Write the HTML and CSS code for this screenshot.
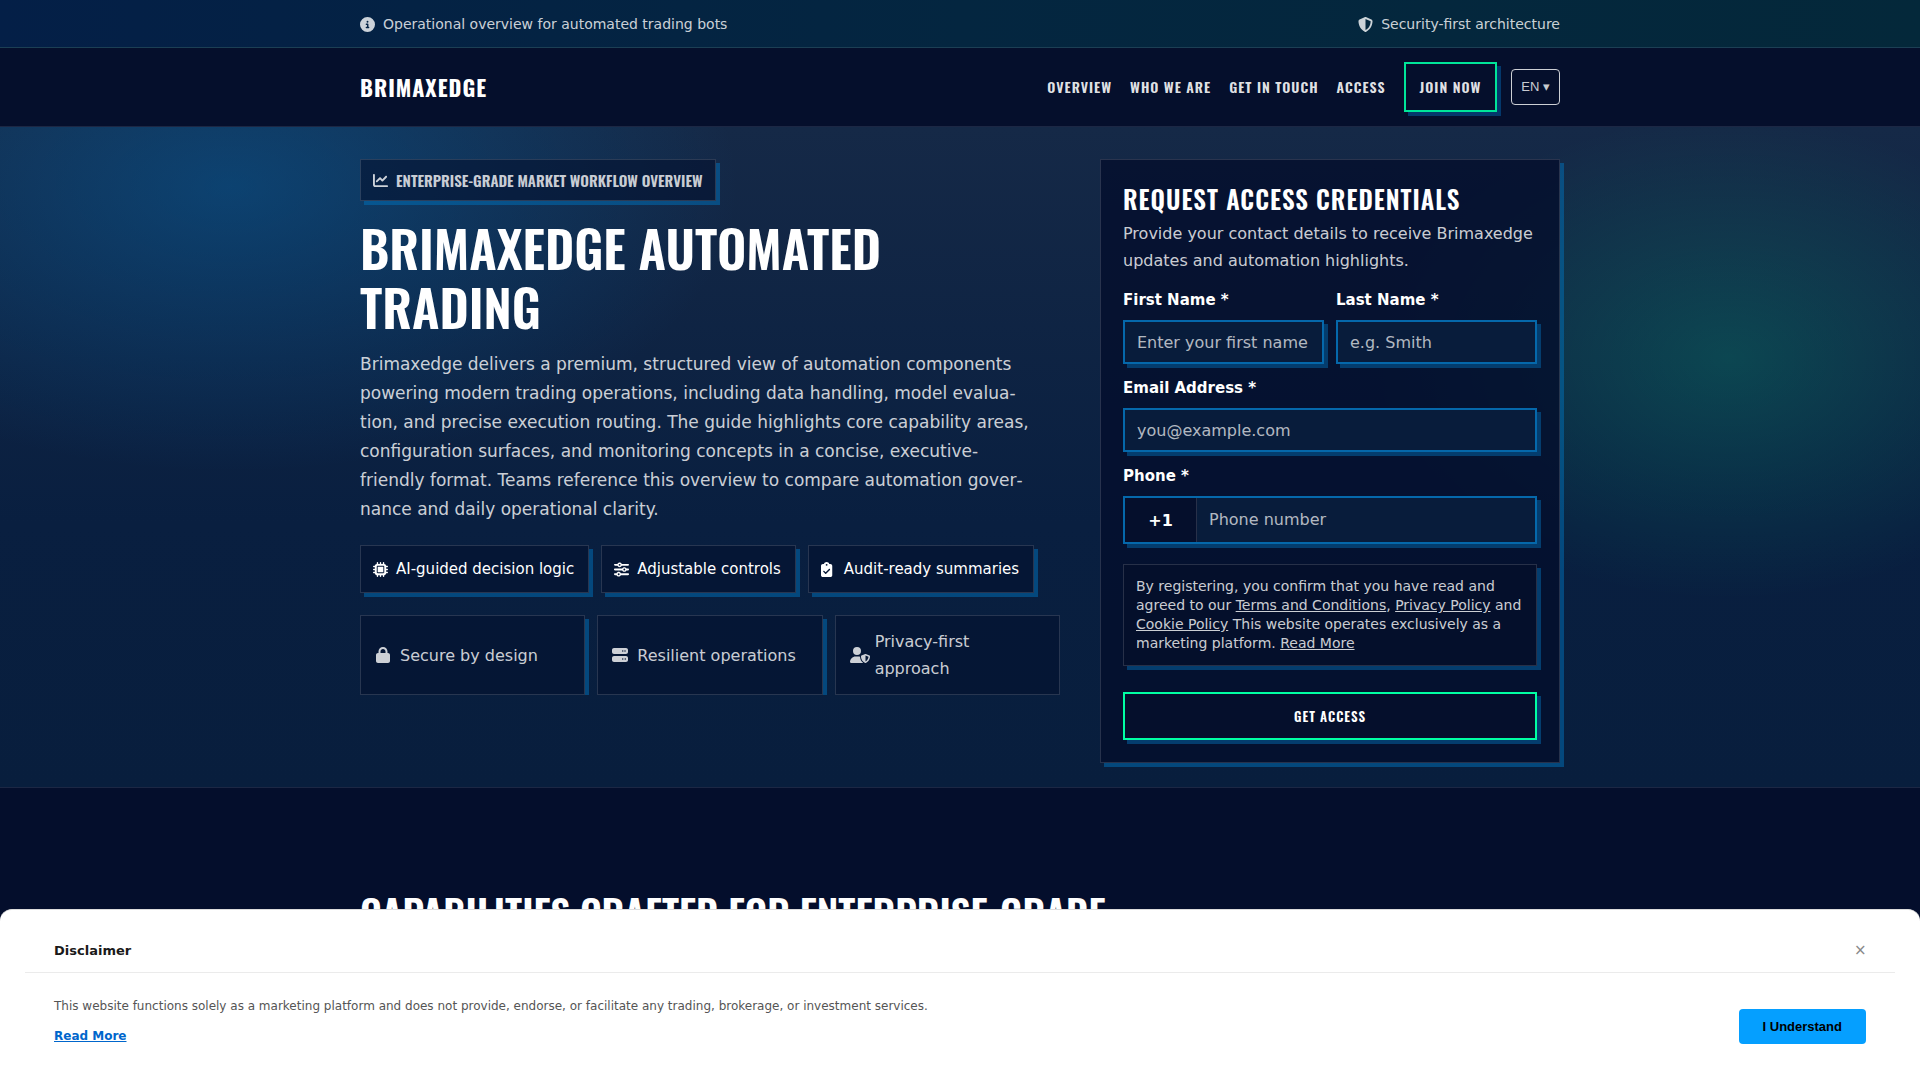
FILE: index.html
```html
<!DOCTYPE html>
<html lang="en">
<head>
<meta charset="utf-8">
<meta name="viewport" content="width=device-width, initial-scale=1">
<title>Brimaxedge</title>
<link rel="stylesheet" href="styles.css">
</head>
<body>
<div class="topbar">
  <div class="container topbar-inner">
    <span class="topbar-item"><svg class="icon" viewBox="0 0 512 512" aria-hidden="true"><path d="M256 512A256 256 0 1 0 256 0a256 256 0 1 0 0 512zM216 336h24V272H216c-13.3 0-24-10.7-24-24s10.7-24 24-24h48c13.3 0 24 10.7 24 24v88h8c13.3 0 24 10.7 24 24s-10.7 24-24 24H216c-13.3 0-24-10.7-24-24s10.7-24 24-24zm40-208a32 32 0 1 1 0 64 32 32 0 1 1 0-64z"/></svg>Operational overview for automated trading bots</span>
    <span class="topbar-item"><svg class="icon" viewBox="0 0 512 512" aria-hidden="true"><path d="M256 0c4.6 0 9.2 1 13.4 2.9L457.7 82.8c22 9.3 38.4 31 38.3 57.2c-.5 99.2-41.3 280.7-213.6 363.2c-16.7 8-36.1 8-52.8 0C57.3 420.7 16.5 239.2 16 140c-.1-26.2 16.3-47.9 38.3-57.2L242.7 2.9C246.8 1 251.4 0 256 0zm0 66.8V444.8C394 378 431.1 230.1 432 141.4L256 66.8z"/></svg>Security-first architecture</span>
  </div>
</div>

<header class="header">
  <div class="container header-inner">
    <a class="logo" href="#">Brimaxedge</a>
    <nav class="nav">
      <a class="nav-link" href="#overview">Overview</a>
      <a class="nav-link" href="#about">Who we are</a>
      <a class="nav-link" href="#contact">Get in touch</a>
      <a class="nav-link" href="#access">Access</a>
      <a class="nav-cta" href="#join">Join now</a>
      <button class="lang" type="button">EN ▾</button>
    </nav>
  </div>
</header>

<main>
<section class="hero">
  <div class="container hero-grid">
    <div class="hero-copy">
      <p class="badge"><svg class="icon" viewBox="0 0 512 512" aria-hidden="true"><path d="M64 64c0-17.700-14.300-32-32-32S0 46.300 0 64V400c0 44.200 35.800 80 80 80H480c17.700 0 32-14.300 32-32s-14.300-32-32-32H80c-8.800 0-16-7.200-16-16V64zm406.600 86.600c12.500-12.500 12.500-32.800 0-45.300s-32.800-12.500-45.300 0L320 210.700l-57.400-57.400c-12.500-12.500-32.800-12.500-45.300 0l-112 112c-12.500 12.500-12.500 32.800 0 45.300s32.800 12.500 45.300 0L240 221.300l57.400 57.400c12.500 12.500 32.800 12.500 45.300 0l128-128z"/></svg>Enterprise-grade market workflow overview</p>
      <h1 class="hero-title">Brimaxedge Automated Trading</h1>
      <p class="lead">Brimaxedge delivers a premium, structured view of automation components powering modern trading operations, including data handling, model evalua&shy;tion, and precise execution routing. The guide highlights core capability areas, configuration surfaces, and monitoring concepts in a concise, executive-friendly format. Teams reference this overview to compare automation gover&shy;nance and daily operational clarity.</p>
      <ul class="chips">
        <li class="chip"><svg class="icon" viewBox="0 0 512 512" aria-hidden="true"><path fill-rule="evenodd" d="M176 24c0-13.300-10.700-24-24-24s-24 10.700-24 24V64c-35.300 0-64 28.700-64 64H24c-13.300 0-24 10.700-24 24s10.700 24 24 24H64v56H24c-13.300 0-24 10.700-24 24s10.700 24 24 24H64v56H24c-13.300 0-24 10.700-24 24s10.700 24 24 24H64c0 35.300 28.700 64 64 64v40c0 13.300 10.700 24 24 24s24-10.700 24-24V448h56v40c0 13.300 10.700 24 24 24s24-10.700 24-24V448h56v40c0 13.300 10.700 24 24 24s24-10.700 24-24V448c35.300 0 64-28.700 64-64h40c13.300 0 24-10.700 24-24s-10.700-24-24-24H448V280h40c13.300 0 24-10.700 24-24s-10.700-24-24-24H448V176h40c13.300 0 24-10.700 24-24s-10.700-24-24-24H448c0-35.300-28.700-64-64-64V24c0-13.300-10.700-24-24-24s-24 10.700-24 24V64H280V24c0-13.300-10.700-24-24-24s-24 10.700-24 24V64H176V24zM160 128H352c17.700 0 32 14.300 32 32V352c0 17.700-14.300 32-32 32H160c-17.700 0-32-14.300-32-32V160c0-17.700 14.300-32 32-32zm192 32H160V352H352V160z"/></svg>AI-guided decision logic</li>
        <li class="chip"><svg class="icon" viewBox="0 0 512 512" aria-hidden="true"><path d="M0 416c0 17.700 14.300 32 32 32l54.700 0c12.300 28.300 40.500 48 73.300 48s61-19.700 73.300-48L480 448c17.700 0 32-14.300 32-32s-14.300-32-32-32l-246.700 0c-12.300-28.300-40.500-48-73.300-48s-61 19.700-73.300 48L32 384c-17.700 0-32 14.300-32 32zm128 0a32 32 0 1 1 64 0 32 32 0 1 1 -64 0zM320 256a32 32 0 1 1 64 0 32 32 0 1 1 -64 0zm32-80c-32.800 0-61 19.700-73.300 48L32 224c-17.700 0-32 14.300-32 32s14.300 32 32 32l246.700 0c12.300 28.300 40.500 48 73.300 48s61-19.700 73.300-48l54.700 0c17.700 0 32-14.300 32-32s-14.300-32-32-32l-54.700 0c-12.300-28.300-40.500-48-73.300-48zM192 128a32 32 0 1 1 0-64 32 32 0 1 1 0 64zm73.300-64C253 35.700 224.800 16 192 16s-61 19.700-73.300 48L32 64C14.300 64 0 78.300 0 96s14.300 32 32 32l86.700 0c12.300 28.300 40.500 48 73.300 48s61-19.700 73.300-48L480 128c17.700 0 32-14.300 32-32s-14.300-32-32-32L265.300 64z"/></svg>Adjustable controls</li>
        <li class="chip"><svg class="icon" viewBox="0 0 512 512" aria-hidden="true"><path d="M192 0c-41.800 0-77.400 26.700-90.500 64H64C28.700 64 0 92.700 0 128V448c0 35.300 28.700 64 64 64H320c35.300 0 64-28.700 64-64V128c0-35.300-28.700-64-64-64H282.500C269.400 26.700 233.800 0 192 0zm0 64a32 32 0 1 1 0 64 32 32 0 1 1 0-64zM305 273L177 401c-9.400 9.400-24.600 9.400-33.900 0L79 337c-9.400-9.400-9.400-24.600 0-33.900s24.600-9.400 33.900 0l47 47L271 239c9.400-9.400 24.600-9.400 33.900 0s9.400 24.600 0 33.900z"/></svg>Audit-ready summaries</li>
      </ul>
      <ul class="trust">
        <li class="trust-item"><svg class="icon-md" viewBox="0 0 448 512" aria-hidden="true"><path d="M144 144v48H304V144c0-44.200-35.800-80-80-80s-80 35.800-80 80zM80 192V144C80 64.500 144.500 0 224 0s144 64.500 144 144v48h16c35.300 0 64 28.700 64 64V448c0 35.300-28.700 64-64 64H64c-35.300 0-64-28.700-64-64V256c0-35.300 28.700-64 64-64H80z"/></svg>Secure by design</li>
        <li class="trust-item"><svg class="icon-md" viewBox="0 0 512 512" aria-hidden="true"><path d="M64 32C28.700 32 0 60.700 0 96v64c0 35.300 28.700 64 64 64H448c35.300 0 64-28.700 64-64V96c0-35.300-28.700-64-64-64H64zm280 72a24 24 0 1 1 0 48 24 24 0 1 1 0-48zm48 24a24 24 0 1 1 48 0 24 24 0 1 1 -48 0zM64 288c-35.300 0-64 28.700-64 64v64c0 35.300 28.700 64 64 64H448c35.300 0 64-28.700 64-64V352c0-35.300-28.700-64-64-64H64zm280 72a24 24 0 1 1 0 48 24 24 0 1 1 0-48zm56 24a24 24 0 1 1 48 0 24 24 0 1 1 -48 0z"/></svg>Resilient operations</li>
        <li class="trust-item"><svg class="icon-md" viewBox="0 0 512 512" aria-hidden="true"><path d="M224 256A128 128 0 1 0 224 0a128 128 0 1 0 0 256zm-45.700 48C79.800 304 0 383.800 0 482.300C0 498.700 13.300 512 29.700 512H418.300c1.800 0 3.500-.2 5.300-.5c-76.300-55.100-99.800-141-103.100-200.200c-16.100-4.800-33.100-7.300-50.700-7.300H178.300zm308.800-78.300l-120 48C358 277.400 352 286.200 352 296c0 63.300 25.900 168.800 134.800 214.200c5.900 2.500 12.600 2.500 18.500 0C614.100 464.800 640 359.300 640 296c0-9.800-6-18.600-15.100-22.300l-120-48c-5.700-2.300-12.100-2.300-17.800 0zM591.400 312c-3.900 50.700-27.200 116.700-95.400 149.700V273.800L591.400 312z"/></svg>Privacy-first approach</li>
      </ul>
    </div>

    <form class="card">
      <h2 class="card-title">Request access credentials</h2>
      <p class="card-text">Provide your contact details to receive Brimaxedge updates and automation highlights.</p>
      <div class="fields">
        <div class="field">
          <label class="label" for="first">First Name *</label>
          <input class="input" id="first" type="text" placeholder="Enter your first name">
        </div>
        <div class="field">
          <label class="label" for="last">Last Name *</label>
          <input class="input" id="last" type="text" placeholder="e.g. Smith">
        </div>
        <div class="field field-wide">
          <label class="label" for="email">Email Address *</label>
          <input class="input" id="email" type="email" placeholder="you@example.com">
        </div>
        <div class="field field-wide">
          <label class="label" for="phone">Phone *</label>
          <div class="phone">
            <span class="phone-code">+1</span>
            <input class="phone-input" id="phone" type="tel" placeholder="Phone number">
          </div>
        </div>
      </div>
      <p class="consent">By registering, you confirm that you have read and agreed to our <a href="#terms">Terms and Conditions</a>, <a href="#privacy">Privacy Policy</a> and <a href="#cookies">Cookie Policy</a> This website operates exclusively as a marketing platform. <a href="#more">Read More</a></p>
      <button class="submit" type="submit">Get access</button>
    </form>
  </div>
</section>

<section class="capabilities">
  <div class="container">
    <h2 class="section-title">Capabilities crafted for enterprise-grade</h2>
  </div>
</section>
</main>

<aside class="disclaimer" aria-label="Disclaimer">
  <div class="disclaimer-head">
    <strong class="disclaimer-title">Disclaimer</strong>
    <button class="close" type="button" aria-label="Close">×</button>
  </div>
  <div class="disclaimer-body">
    <div class="disclaimer-copy">
      <p class="disclaimer-text">This website functions solely as a marketing platform and does not provide, endorse, or facilitate any trading, brokerage, or investment services.</p>
      <a class="disclaimer-link" href="#more">Read More</a>
    </div>
    <button class="accept" type="button">I Understand</button>
  </div>
</aside>
</body>
</html>
```
FILE: styles.css
```css
:root {
  --display: "Oswald", "Liberation Sans Narrow", sans-serif;
  --body: "DejaVu Sans", sans-serif;
  --bg: #040e2c;
  --soft: rgba(255, 255, 255, .8);
  --line: rgba(255, 255, 255, .14);
  --shadow: rgba(0, 113, 188, .5);
  --panel: rgba(4, 16, 46, .6);
  --blue: #0568ab;
  --green: #00ffa3;
}

* { box-sizing: border-box; margin: 0; }

body {
  font: 16px/27px var(--body);
  background: var(--bg);
  color: #fff;
}

ul { list-style: none; padding: 0; }
a { color: inherit; }
svg { display: block; flex: none; fill: currentColor; }

.icon { width: 15px; height: 15px; }
.icon-md { width: 18px; height: 16px; overflow: visible; }

.container { max-width: 1200px; margin: 0 auto; }

.topbar {
  background: linear-gradient(90deg, #041f47, #042640 50%, #04283a);
  border-bottom: 1px solid #1c3f54;
  color: var(--soft);
  font-size: 14px;
  line-height: 23px;
}
.topbar-inner { display: flex; justify-content: space-between; padding: 13px 0 11px; }
.topbar-item { display: flex; align-items: center; gap: 8px; }

.header { border-bottom: 1px solid #1c2744; background: #050f2c; }
.header-inner { display: flex; align-items: center; justify-content: space-between; padding: 14px 0; }
.logo {
  font: 700 22px/36px var(--display);
  letter-spacing: 1px;
  text-transform: uppercase;
  text-decoration: none;
}
.nav { display: flex; align-items: center; gap: 18px; }
.nav-link, .nav-cta {
  font: 600 14px/24px var(--display);
  letter-spacing: 1px;
  text-transform: uppercase;
  text-decoration: none;
  color: rgba(255, 255, 255, .9);
}
.nav-cta {
  border: 2px solid #00e599;
  padding: 11px 14px;
  box-shadow: 4px 4px 0 #04386b;
}
.lang {
  margin-left: -4px;
  font: 13px/20px "Liberation Sans", sans-serif;
  color: var(--soft);
  background: none;
  border: 1px solid rgba(255, 255, 255, .8);
  border-radius: 4px;
  padding: 7px 9px;
}

.hero {
  border-bottom: 1px solid #1c2744;
  background:
    radial-gradient(ellipse 820px 460px at 12% 9%, rgba(0, 113, 188, .36), transparent 62%),
    radial-gradient(ellipse 570px 390px at 90% 35%, rgba(0, 255, 157, .16), transparent 62%),
    linear-gradient(180deg, #152947, #091f40 60%, #081e3d);
}
.hero-grid {
  display: grid;
  grid-template-columns: minmax(0, 1fr) 460px;
  gap: 40px;
  align-items: start;
  padding: 32px 0 24px;
}

.badge {
  display: inline-flex;
  align-items: center;
  gap: 8px;
  padding: 8px 12px;
  border: 1px solid var(--line);
  background: var(--panel);
  box-shadow: 4px 4px 0 var(--shadow);
  font: 600 15px/24px var(--display);
  text-transform: uppercase;
  color: var(--soft);
  vertical-align: top;
}
.hero-title {
  margin-top: 17px;
  font: 600 51px/59px var(--display);
  text-transform: uppercase;
}
.lead {
  max-width: 672px;
  margin-top: 14px;
  font-size: 17px;
  line-height: 29px;
  color: var(--soft);
}

.chips { display: flex; flex-wrap: wrap; gap: 12px; margin-top: 21px; }
.chip {
  display: flex;
  align-items: center;
  gap: 8px;
  padding: 10px 14px 10px 12px;
  border: 1px solid var(--line);
  background: var(--panel);
  box-shadow: 4px 4px 0 var(--shadow);
  font-size: 15px;
  line-height: 26px;
}
.trust {
  display: grid;
  grid-template-columns: repeat(3, 1fr);
  gap: 12px;
  margin-top: 22px;
  overflow: hidden;
}
.trust-item {
  display: flex;
  align-items: center;
  gap: 8px;
  min-height: 80px;
  padding: 12px 13px;
  border: 1px solid var(--line);
  background: var(--panel);
  box-shadow: 4px 4px 0 var(--shadow);
  color: var(--soft);
}

.card {
  padding: 22px;
  border: 1px solid var(--line);
  background: rgba(4, 14, 44, .8);
  box-shadow: 4px 4px 0 var(--shadow);
}
.card-title {
  margin-bottom: 4px;
  font: 600 25px/34px var(--display);
  letter-spacing: 1px;
  text-transform: uppercase;
}
.card-text { color: var(--soft); }
.fields {
  display: grid;
  grid-template-columns: 1fr 1fr;
  gap: 12px;
  margin-top: 14px;
}
.field { display: flex; flex-direction: column; gap: 8px; min-width: 0; }
.field-wide { grid-column: 1 / -1; }
.label { font-weight: 700; font-size: 15px; line-height: 24px; }
.input, .phone {
  width: 100%;
  height: 44px;
  border: 2px solid var(--blue);
  background: #081c3b;
  box-shadow: 4px 4px 0 #043d6e;
}
.input, .phone-input {
  padding: 0 12px;
  font: 16px/24px var(--body);
  color: #fff;
  border-radius: 0;
}
.input::placeholder, .phone-input::placeholder { color: rgba(255, 255, 255, .7); opacity: 1; }
.phone { display: flex; height: 48px; }
.phone-code {
  display: flex;
  align-items: center;
  justify-content: center;
  width: 72px;
  background: #050f2c;
  border-right: 1px solid var(--line);
  font-weight: 700;
}
.phone-input { flex: 1; min-width: 0; border: 0; background: none; }

.consent {
  margin-top: 20px;
  padding: 12px;
  min-height: 102px;
  border: 1px solid var(--line);
  background: #040f2b;
  box-shadow: 4px 4px 0 #043d6e;
  font-size: 14px;
  line-height: 19px;
  color: var(--soft);
}
.submit {
  display: block;
  width: 100%;
  height: 48px;
  margin-top: 26px;
  border: 2px solid var(--green);
  background: #050f2c;
  box-shadow: 4px 4px 0 #043d6e;
  color: #fff;
  font: 600 13px/24px var(--display);
  letter-spacing: 1px;
  text-transform: uppercase;
}

.capabilities { padding: 96px 0 140px; }
.section-title {
  font: 600 39px/56px var(--display);
  text-transform: uppercase;
}

.disclaimer {
  position: fixed;
  inset: auto 0 0;
  padding: 24px 25px 32px;
  border-top: 1px solid #ddd;
  border-radius: 12px 12px 0 0;
  background: #fff;
}
.disclaimer-head {
  display: flex;
  align-items: center;
  justify-content: space-between;
  padding: 6px 29px 11px;
  border-bottom: 1px solid #ebebeb;
}
.disclaimer-title { color: #1a1a1a; font-size: 13px; line-height: 21px; }
.close {
  width: 12px;
  padding: 0;
  border: 0;
  background: none;
  color: #888;
  font: 15px/21px var(--body);
}
.disclaimer-body {
  display: flex;
  align-items: flex-end;
  justify-content: space-between;
  padding: 22px 29px 0;
}
.disclaimer-text { color: #555; font-size: 12px; line-height: 22px; }
.disclaimer-link {
  display: inline-block;
  margin-top: 8px;
  color: #0066cc;
  font-size: 12px;
  line-height: 22px;
  font-weight: 700;
}
.accept {
  height: 35px;
  margin-bottom: 4px;
  padding: 0 24px;
  border: 0;
  border-radius: 4px;
  background: #059fff;
  color: #000;
  font: 700 13px/20px "Liberation Sans", sans-serif;
}
```
